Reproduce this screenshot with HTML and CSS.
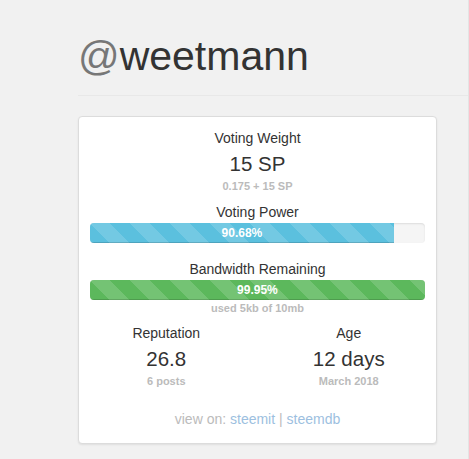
FILE: index.html
```html
<!DOCTYPE html>
<html lang="en">
<head>
  <meta charset="UTF-8" />
  <meta name="viewport" content="width=device-width, initial-scale=1.0"/>
  <title>@weetmann</title>
  <link rel="stylesheet" href="styles.css">
</head>
<body>
  <div class="page">
    <header class="page-header">
      <h1><span class="at">@</span>weetmann</h1>
    </header>

    <!-- Account stats card -->
    <section class="card">
      <div class="stat">
        <div class="stat-label">Voting Weight</div>
        <div class="stat-value">15 SP</div>
        <div class="stat-note">0.175 + 15 SP</div>
      </div>

      <div class="stat-label">Voting Power</div>
      <div class="progress">
        <div class="progress-bar bar-info" style="width: 90.68%">90.68%</div>
      </div>

      <div class="stat-label label-gap">Bandwidth Remaining</div>
      <div class="progress">
        <div class="progress-bar bar-success" style="width: 99.95%">99.95%</div>
      </div>
      <div class="stat-note">used 5kb of 10mb</div>

      <div class="row">
        <div class="col">
          <div class="stat-label">Reputation</div>
          <div class="stat-value">26.8</div>
          <div class="stat-note">6 posts</div>
        </div>
        <div class="col">
          <div class="stat-label">Age</div>
          <div class="stat-value">12 days</div>
          <div class="stat-note">March 2018</div>
        </div>
      </div>

      <div class="view-on">
        view on: <a href="#">steemit</a> | <a href="#">steemdb</a>
      </div>
    </section>
  </div>
</body>
</html>
```

FILE: styles.css
```css
:root {
  --text-color: #333;
  --muted: #bbb;
  --info: #5bc0de;
  --success: #5cb85c;
  --link: #9dbfe0;
}

* {
  box-sizing: border-box;
}

body {
  margin: 0;
  background-color: #f1f1f1;
  color: var(--text-color);
  font-family: "Liberation Sans", Arial, sans-serif;
  font-size: 14px;
  line-height: 20px;
  overflow: hidden;
}

.page {
  padding-left: 78px;
  height: 459px;
  border-right: 1px solid #e4e4e4;
  width: 469px;
}

/* Header */
.page-header {
  padding-top: 34px;
  padding-bottom: 16px;
  border-bottom: 1px solid #e8e8e8;
  margin-bottom: 20px;
}

.page-header h1 {
  margin: 0;
  font-size: 41px;
  font-weight: normal;
  line-height: 45px;
  color: var(--text-color);
}

.page-header .at {
  color: #777;
}

/* Card */
.card {
  width: 359px;
  background-color: white;
  border: 1px solid #dcdcdc;
  border-radius: 4px;
  box-shadow: 0 1px 2px rgba(0, 0, 0, 0.08);
  padding: 11px 11px 14px;
  text-align: center;
}

.stat-label {
  font-size: 14px;
  line-height: 20px;
}

.label-gap {
  margin-top: 16px;
}

.stat-value {
  font-size: 20.5px;
  line-height: 28px;
  margin-top: 2px;
}

.stat-note {
  font-size: 11px;
  font-weight: bold;
  line-height: 16px;
  color: var(--muted);
}

.stat {
  margin-bottom: 8px;
}

/* Progress bars */
.progress {
  height: 20px;
  background-color: #f5f5f5;
  border-radius: 4px;
  box-shadow: inset 0 1px 2px rgba(0, 0, 0, 0.1);
  overflow: hidden;
  margin-top: 1px;
}

.progress-bar {
  height: 100%;
  color: white;
  font-size: 12px;
  font-weight: bold;
  line-height: 20px;
  text-align: center;
  box-shadow: inset 0 -1px 0 rgba(0, 0, 0, 0.15);
  background-image: linear-gradient(45deg, rgba(255, 255, 255, 0.15) 25%, transparent 25%, transparent 50%, rgba(255, 255, 255, 0.15) 50%, rgba(255, 255, 255, 0.15) 75%, transparent 75%, transparent);
  background-size: 40px 40px;
}

.bar-info {
  background-color: var(--info);
}

.bar-success {
  background-color: var(--success);
}

/* Reputation / Age */
.row {
  display: grid;
  grid-template-columns: 1fr 1fr;
  margin: 7px -15px 0;
}

.view-on {
  margin-top: 20px;
  color: var(--muted);
}

.view-on a {
  color: var(--link);
  text-decoration: none;
}
```
